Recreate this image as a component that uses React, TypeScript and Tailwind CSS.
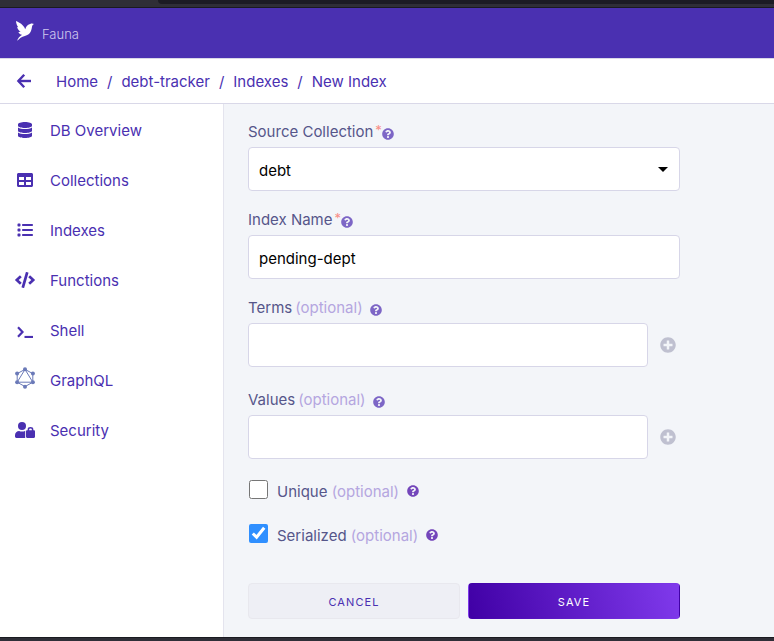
import type { ReactNode } from "react";
import { FaDatabase, FaTable, FaCode, FaQuestionCircle, FaPlusCircle } from "react-icons/fa";
import { FaList } from "react-icons/fa6";

function BirdLogo() {
  return (
    <svg viewBox="0 0 18 20" className="h-5 w-[18px] fill-white" aria-hidden="true">
      <path d="M0 0 C3 1.2 7.6 3.6 9.2 8.2 C10.2 4.8 12.2 3.2 14.2 2.9 C15.6 2.3 17 2.5 18 3 C16.8 3.4 16.4 4.4 16 5.8 C15.4 9.4 14.6 13.8 8.8 15 C5.6 15.6 3.4 17.6 1.4 19.8 C1.2 17.8 4 15.4 6 13.8 C4 13.4 3 12.4 2.4 11 C3.2 11.1 4 11 4.6 10.6 C2.6 9.4 1.4 7.8 1.1 6 L2.2 6.2 C0.8 4.2 0.2 2.4 0 0Z" />
    </svg>
  );
}

function BackIcon() {
  return (
    <svg viewBox="0 0 16 16" className="size-4 fill-none stroke-current stroke-[2.4]" aria-hidden="true">
      <path d="M8.2 1.8 L2.4 8 L8.2 14.2" />
      <path d="M2 8 H15" />
    </svg>
  );
}

function ShellIcon() {
  return (
    <svg viewBox="0 0 16 12" className="h-3 w-4 fill-none stroke-current stroke-[2.2]" aria-hidden="true">
      <path d="M1 1.2 L5.5 6 L1 10.8" />
      <path d="M7.5 11 H16" />
    </svg>
  );
}

function GraphqlIcon() {
  return (
    <svg viewBox="0 0 20 22" className="h-[22px] w-5 text-[#6b7ab8]" aria-hidden="true">
      <path
        d="M10 2.4 L17.8 6.6 V15.2 L10 19.6 L2.2 15.2 V6.6 Z M10 2.4 L17.8 15.2 H2.2 Z"
        className="fill-none stroke-current stroke-1"
      />
      <g className="fill-current">
        <circle cx="10" cy="2.2" r="2" />
        <circle cx="17.9" cy="6.6" r="2" />
        <circle cx="17.9" cy="15.3" r="2" />
        <circle cx="10" cy="19.8" r="2" />
        <circle cx="2.1" cy="15.3" r="2" />
        <circle cx="2.1" cy="6.6" r="2" />
      </g>
    </svg>
  );
}

function UserLockIcon() {
  return (
    <svg viewBox="0 0 20 16" className="h-4 w-5 fill-current" aria-hidden="true">
      <circle cx="7" cy="4" r="4" />
      <path d="M4.2 9 C4.8 9.3 6 9.6 7 9.6 C8 9.6 9.2 9.3 9.8 9 H10.2 V16 H1.4 C0.6 16 0 15.4 0 14.6 V13.2 C0 10.9 1.9 9 4.2 9Z" />
      <path d="M12.2 8.2 H18.8 C19.5 8.2 20 8.8 20 9.4 V14.8 C20 15.5 19.5 16 18.8 16 H12.2 C11.5 16 11 15.5 11 14.8 V9.4 C11 8.8 11.5 8.2 12.2 8.2Z" />
      <path d="M13.4 9 V7.4 C13.4 5.2 17.6 5.2 17.6 7.4 V9" className="fill-none stroke-current stroke-[1.5]" />
    </svg>
  );
}

const navItems: { label: string; icon: ReactNode }[] = [
  { label: "DB Overview", icon: <FaDatabase className="size-4" /> },
  { label: "Collections", icon: <FaTable className="size-4" /> },
  { label: "Indexes", icon: <FaList className="size-4" /> },
  { label: "Functions", icon: <FaCode className="h-4 w-5" /> },
  { label: "Shell", icon: <span className="pt-1"><ShellIcon /></span> },
  { label: "GraphQL", icon: <span className="pb-1"><GraphqlIcon /></span> },
  { label: "Security", icon: <UserLockIcon /> },
];

const crumbs = ["Home", "debt-tracker", "Indexes", "New Index"];

const boxClass =
  "h-11 w-full appearance-none rounded border border-[#d7d6e8] bg-white px-[10px] pt-[3px] text-black outline-none focus:border-[#4a30b1]";

function Help({ topic, strong }: { topic: string; strong?: boolean }) {
  return (
    <button type="button" aria-label={"Help: " + topic} className={strong ? "text-[#7446bb]" : "pt-1 text-[#7d66c6]"}>
      <FaQuestionCircle className="size-3" />
    </button>
  );
}

function Optional() {
  return <span className="text-[#b5a6e0]">(optional)</span>;
}

function FieldLabel({ id, text, required }: { id: string; text: string; required?: boolean }) {
  return (
    <div className="flex h-7 items-center pb-0.5">
      <label htmlFor={id} className="flex">
        <span>{text}</span>
        {required ? (
          <span className="pl-0.5 text-[13px] leading-5 text-[#f98d85]">*</span>
        ) : (
          <span className="pl-[3px]">
            <Optional />
          </span>
        )}
      </label>
      <span className={required ? "flex" : "flex pl-[7px]"}>
        <Help topic={text} />
      </span>
    </div>
  );
}

function AddableField({ id, text }: { id: string; text: string }) {
  return (
    <div>
      <FieldLabel id={id} text={text} />
      <div className="flex items-center gap-3 pr-1">
        <input id={id} type="text" className={boxClass} />
        <button type="button" aria-label={"Add " + text} className="shrink-0 text-[#bfc0d0]">
          <FaPlusCircle className="size-4" />
        </button>
      </div>
    </div>
  );
}

function CheckField({ id, text, checked }: { id: string; text: string; checked?: boolean }) {
  return (
    <div className="flex h-6 items-center pl-px">
      <span className="flex pr-[9px] pb-1">
        <input id={id} type="checkbox" defaultChecked={checked} className="size-[19px] accent-[#2f8fff]" />
      </span>
      <label htmlFor={id} className="pt-0.5 pr-2">
        {text} <Optional />
      </label>
      <span className="flex">
        <Help topic={text} strong />
      </span>
    </div>
  );
}

export default function App() {
  return (
    <div className="flex min-h-screen flex-col bg-white font-['Inter',sans-serif] text-[15px] leading-6 text-[#4a30b1]">
      <div className="h-2 border-b border-[#1a1a20] bg-[#2f2e37] pl-[158px]">
        <div className="h-1 rounded-bl bg-[#1c1b24]" />
      </div>

      <header className="flex h-[50px] items-center gap-2 bg-[#4a30b1] px-4">
        <span className="pb-1">
          <BirdLogo />
        </span>
        <span className="pt-0.5 text-[13px] font-light text-[#d0c8ee]">Fauna</span>
      </header>

      <nav
        aria-label="Breadcrumb"
        className="flex h-[46px] items-center gap-6 border-y border-[#d9d8e8] px-4"
      >
        <a href="#back" aria-label="Back">
          <BackIcon />
        </a>
        <ol className="flex pt-0.5">
          {crumbs.map((crumb, i) => (
            <li key={crumb} className="flex">
              {i > 0 && <span className="px-[9px]">/</span>}
              <a href={"#" + crumb}>{crumb}</a>
            </li>
          ))}
        </ol>
      </nav>

      <div className="flex grow">
        <aside className="w-56 shrink-0 border-r border-[#e4e4ee]">
          <ul className="pt-0.5">
            {navItems.map((item) => (
              <li key={item.label}>
                <a href={"#" + item.label} className="flex h-[50px] items-center gap-[15px] pl-[15px]">
                  <span className="flex w-5 justify-center pb-0.5">{item.icon}</span>
                  <span>{item.label}</span>
                </a>
              </li>
            ))}
          </ul>
        </aside>

        <main className="grow bg-[#f3f5f9] px-6 pt-[15px] pb-[18px] text-[#56568a]">
          <form className="max-w-[432px]">
            <div className="mb-4">
              <FieldLabel id="source" text="Source Collection" required />
              <div className="relative">
                <select id="source" defaultValue="debt" className={boxClass}>
                  <option value="debt">debt</option>
                </select>
                <svg
                  viewBox="0 0 10 5"
                  className="pointer-events-none absolute top-5 right-3 h-[5px] w-[10px] fill-black"
                  aria-hidden="true"
                >
                  <path d="M0 0 H10 L5 5 Z" />
                </svg>
              </div>
            </div>

            <div className="mb-4">
              <FieldLabel id="name" text="Index Name" required />
              <input id="name" type="text" defaultValue="pending-dept" className={boxClass} />
            </div>

            <div className="flex flex-col gap-5">
              <AddableField id="terms" text="Terms" />
              <AddableField id="values" text="Values" />
              <CheckField id="unique" text="Unique" />
              <CheckField id="serialized" text="Serialized" checked />
            </div>

            <div className="mt-9 grid grid-cols-2 gap-2 text-[11px] tracking-widest">
              <button type="button" className="h-9 rounded border border-[#e8e8ee] bg-[#eeeff5] pt-0.5 text-[#4a30b1]">
                CANCEL
              </button>
              <button
                type="submit"
                className="h-9 rounded border border-transparent bg-[linear-gradient(76deg,#4000a5,#803aec)] pt-0.5 text-white"
              >
                SAVE
              </button>
            </div>
          </form>
        </main>
      </div>

      <div className="h-1 border-t border-[#1a1a20] bg-[#2f2e37]" />
    </div>
  );
}
